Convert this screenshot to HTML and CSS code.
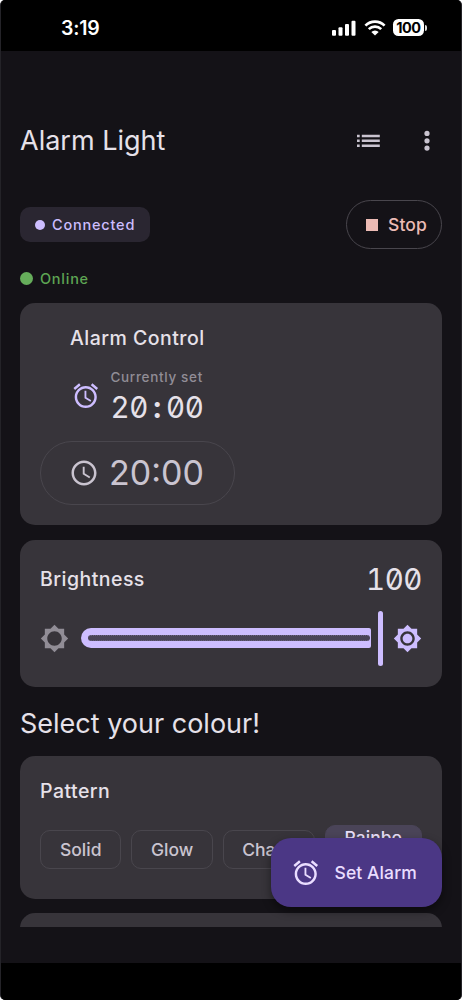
FILE: index.html
```html
<!DOCTYPE html>
<html lang="en">
<head>
<meta charset="utf-8">
<title>Alarm Light</title>
<link rel="stylesheet" href="styles.css">
</head>
<body>
<svg class="defs" width="0" height="0" aria-hidden="true">
  <symbol id="alarm" viewBox="0 0 24 24"><path d="M22 5.72l-4.6-3.86-1.29 1.53 4.6 3.86L22 5.72zM7.88 3.39L6.6 1.86 2 5.71l1.29 1.53 4.59-3.85zM12.5 8H11v6l4.75 2.85.75-1.23-4-2.37V8zM12 4c-4.97 0-9 4.03-9 9s4.02 9 9 9c4.97 0 9-4.03 9-9s-4.03-9-9-9zm0 16c-3.87 0-7-3.13-7-7s3.13-7 7-7 7 3.13 7 7-3.13 7-7 7z"/></symbol>
</svg>
<div class="phone">
  <div class="status">
    <span class="time">3:19</span>
    <svg class="signal" width="24" height="16" viewBox="0 0 24 16"><rect x="0" y="10" width="4" height="5.8" rx="1"/><rect x="6.5" y="7.3" width="4" height="8.5" rx="1"/><rect x="13" y="4" width="4" height="11.8" rx="1"/><rect x="19.5" y="0.8" width="4" height="15" rx="1"/></svg>
    <svg class="wifi" width="22" height="16" viewBox="0 0 22 16"><path d="M1.4 5.6a13.7 13.7 0 0 1 19.2 0M4.8 9.1a8.9 8.9 0 0 1 12.4 0" fill="none" stroke="#fff" stroke-width="2.7"/><path d="M7.3 11.9a5.3 5.3 0 0 1 7.4 0L11 15.6z"/></svg>
    <span class="battery">100</span><i class="battery-cap"></i>
  </div>
  <header class="appbar">
    <h1>Alarm Light</h1>
    <svg class="list" width="23" height="14" viewBox="0 0 23 14"><path d="M0 .7h2.7v2.5H0zM4.8.7h18v2.5h-18zM0 5.6h2.7v2.5H0zM4.8 5.6h18v2.5h-18zM0 10.5h2.7v2.5H0zM4.8 10.5h18v2.5h-18z"/></svg>
    <svg class="more" width="6" height="22" viewBox="0 0 6 22"><circle cx="3" cy="3.4" r="2.6"/><circle cx="3" cy="10.8" r="2.6"/><circle cx="3" cy="18.1" r="2.6"/></svg>
  </header>
  <main class="content">
    <div class="connection">
      <span class="badge"><i class="dot"></i><span class="t-connected">Connected</span></span>
      <button class="stop"><i class="square"></i><span class="t-stop">Stop</span></button>
    </div>
    <div class="online"><i class="dot"></i><span class="t-online">Online</span></div>
    <section class="card alarm-card">
      <h2 class="t-control">Alarm Control</h2>
      <div class="current">
        <svg class="alarm-icon" width="29.5" height="29.5"><use href="#alarm"/></svg>
        <div>
          <div class="caption">Currently set</div>
          <div class="mono clock">20<span class="colon">:</span>00</div>
        </div>
      </div>
      <button class="picker">
        <svg width="30" height="30" viewBox="0 0 24 24"><path d="M11.99 2C6.47 2 2 6.48 2 12s4.47 10 9.99 10C17.52 22 22 17.52 22 12S17.52 2 11.99 2zM12 20c-4.42 0-8-3.58-8-8s3.58-8 8-8 8 3.58 8 8-3.58 8-8 8zm.5-13H11v6l5.25 3.15.75-1.23-4.5-2.67z"/></svg>
        <span class="t-picker">20:00</span>
      </button>
    </section>
    <section class="card brightness">
      <div class="row"><h2 class="t-bright">Brightness</h2><span class="mono value">100</span></div>
      <div class="slider-row">
        <svg class="dim" width="29" height="29" viewBox="0 0 24 24"><path fill-rule="evenodd" d="M20 15.31L23.31 12 20 8.69V4h-4.69L12 .69 8.69 4H4v4.69L.69 12 4 15.31V20h4.69L12 23.31 15.31 20H20v-4.69zM12 18c-3.31 0-6-2.69-6-6s2.69-6 6-6 6 2.69 6 6-2.69 6-6 6z"/></svg>
        <div class="track"><i class="line"></i></div>
        <i class="thumb"></i>
        <svg class="bright" width="29" height="29" viewBox="0 0 24 24"><path fill-rule="evenodd" d="M20 8.69V4h-4.69L12 .69 8.69 4H4v4.69L.69 12 4 15.31V20h4.69L12 23.31 15.31 20H20v-4.69L23.31 12 20 8.69zM12 18c-3.31 0-6-2.69-6-6s2.69-6 6-6 6 2.69 6 6-2.69 6-6 6zm0-10c-2.21 0-4 1.79-4 4s1.79 4 4 4 4-1.79 4-4-1.79-4-4-4z"/></svg>
      </div>
    </section>
    <h1 class="colour">Select your colour!</h1>
    <section class="card pattern">
      <h2 class="t-pattern">Pattern</h2>
      <div class="chips">
        <button class="chip">Solid</button><button class="chip">Glow</button><button class="chip chase">Chase</button><button class="chip selected">Rainbo</button>
      </div>
    </section>
    <section class="card next"></section>
  </main>
  <button class="fab"><svg width="29.5" height="29.5"><use href="#alarm"/></svg><span class="t-fab">Set Alarm</span></button>
  <div class="nav"></div>
</div>
</body>
</html>
```

FILE: styles.css
```css
* { box-sizing: border-box; }
body { margin: 0; background: #fff; font-family: Inter, sans-serif; color: #e6e1e9; }
h1, h2 { margin: 0; white-space: nowrap; }
i { display: block; flex: none; }
svg { display: block; flex: none; fill: currentColor; }
.defs { position: absolute; }
button { font: inherit; color: inherit; background: none; border: 0; padding: 0; margin: 0; white-space: nowrap; }
.phone { position: relative; height: 1000px; width: 462px; overflow: hidden; display: flex; flex-direction: column; background: #141217; border-radius: 5px; border-left: 1px solid #242328; border-right: 1px solid #242328; }

.status { height: 51px; flex: none; margin: 0 -1px; background: #000; color: #fff; display: flex; align-items: center; padding: 4px 35px 0 61px; }
.time { font-size: 19.5px; font-weight: 600; letter-spacing: -.2px; margin-right: auto; }
.wifi { margin: 0 7px 0 8px; }
.battery { width: 31px; height: 17px; border-radius: 5.5px; background: #fff; color: #000; font-size: 14.5px; line-height: 17px; font-weight: 700; text-align: center; letter-spacing: -.5px; }
.battery-cap { width: 2px; height: 6px; margin-left: 1px; background: #ddd; border-radius: 0 2px 2px 0; }

.appbar { height: 149px; flex: none; display: flex; align-items: center; padding: 30px 31px 0 19px; color: #cac4d0; }
.appbar h1 { margin-right: auto; color: #e6e1e9; }
h1 { font-size: 27px; line-height: 34px; font-weight: 400; }
.more { margin-left: 44px; }

.content { height: 727px; flex: none; overflow: hidden; padding: 0 19px; }
.connection { height: 49px; display: flex; align-items: center; justify-content: space-between; }
.badge { width: 130px; height: 35px; border-radius: 10px; background: #2a2631; color: #cdbdff; display: flex; align-items: center; padding-left: 15px; gap: 7px; font-size: 14.5px; font-weight: 500; }
.badge .dot { width: 10px; height: 10px; border-radius: 50%; background: #cdbdff; }
.t-connected { letter-spacing: .8px; }
.stop { width: 96px; height: 49px; border: 1px solid #49464d; border-radius: 25px; display: flex; align-items: center; padding-left: 19px; gap: 10px; color: #ecbbb5; font-size: 17.5px; font-weight: 500; letter-spacing: .1px; }
.square { width: 12px; height: 12px; background: #ecbbb5; }
.online { height: 54px; padding-top: 4px; display: flex; align-items: center; gap: 8px; color: #5ea553; font-size: 14.5px; font-weight: 500; letter-spacing: .75px; }
.online .dot { width: 13px; height: 13px; border-radius: 50%; background: #66ad5b; }
.t-online { margin-left: -1px; }

.card { background: #37343a; border-radius: 15px; }
h2 { font-size: 19.5px; line-height: 24px; font-weight: 500; letter-spacing: .47px; }
.alarm-card { height: 221.5px; margin-bottom: 15px; padding: 23px 20px 0; }
.t-control { padding-left: 30px; }
.current { height: 63px; margin: 16px 0 12px 31px; display: flex; }
.current .alarm-icon { margin: 15px 10px 0 0; color: #cdbdff; }
.caption { font-size: 13.5px; line-height: 18px; color: #918d96; font-weight: 500; padding-top: 2px; height: 23px; letter-spacing: .67px; }
.mono { font-feature-settings: "tnum", "zero"; font-size: 29.5px; line-height: 36px; letter-spacing: -.45px; }
.colon { display: inline-block; width: 18.2px; text-align: center; font-weight: 700; }
.picker { width: 194.5px; height: 63.5px; border: 1px solid #49464d; border-radius: 32px; display: flex; align-items: center; padding-left: 28px; gap: 10px; color: #cac4d0; font-size: 34px; }

.brightness { height: 147.5px; padding: 19px 20px 0; }
.row { display: flex; height: 40px; align-items: center; justify-content: space-between; }
.slider-row { height: 55px; display: flex; align-items: center; margin-top: 12px; }
.dim { color: #918d96; }
.track { width: 290px; height: 20px; margin-left: 12px; flex: none; background: #cdbdff; border-radius: 10px 2px 2px 10px; padding: 7px 1px 0 7px; }
.line { height: 6px; border-radius: 3px; background: #4a4458; border-top: 1px dotted #6b6280; border-bottom: 1px dotted #6b6280; }
.thumb { width: 5px; height: 55px; background: #cdbdff; border-radius: 3px; margin-left: 7px; }
.bright { color: #cdbdff; margin-left: 10px; }
.colour { height: 69px; padding-top: 20px; }

.pattern { height: 143px; padding: 23px 20px 0; margin-bottom: 14px; }
.chips { display: flex; align-items: flex-start; gap: 10px; margin-top: 22px; }
.chip { width: 81.5px; height: 39px; margin-top: 5px; border: 1px solid #49464d; border-radius: 10px; color: #cac4d0; font-size: 17.5px; font-weight: 500; line-height: 24px; }
.chase { width: 92px; }
.selected { width: 97.5px; height: 49px; margin-top: 0; padding-bottom: 24px; border-color: #4a4458; background: #4a4458; color: #e8def8; }
.next { height: 80px; }

.fab { position: absolute; right: 19px; top: 838px; width: 171px; height: 69px; border-radius: 20px; background: #4b3785; color: #e9ddff; box-shadow: 0 4px 10px rgba(0,0,0,.45); display: flex; align-items: center; padding-left: 20px; gap: 14px; font-size: 17.5px; font-weight: 500; letter-spacing: .1px; }
.nav { height: 37px; margin: auto -1px 0; background: #000; }
```
